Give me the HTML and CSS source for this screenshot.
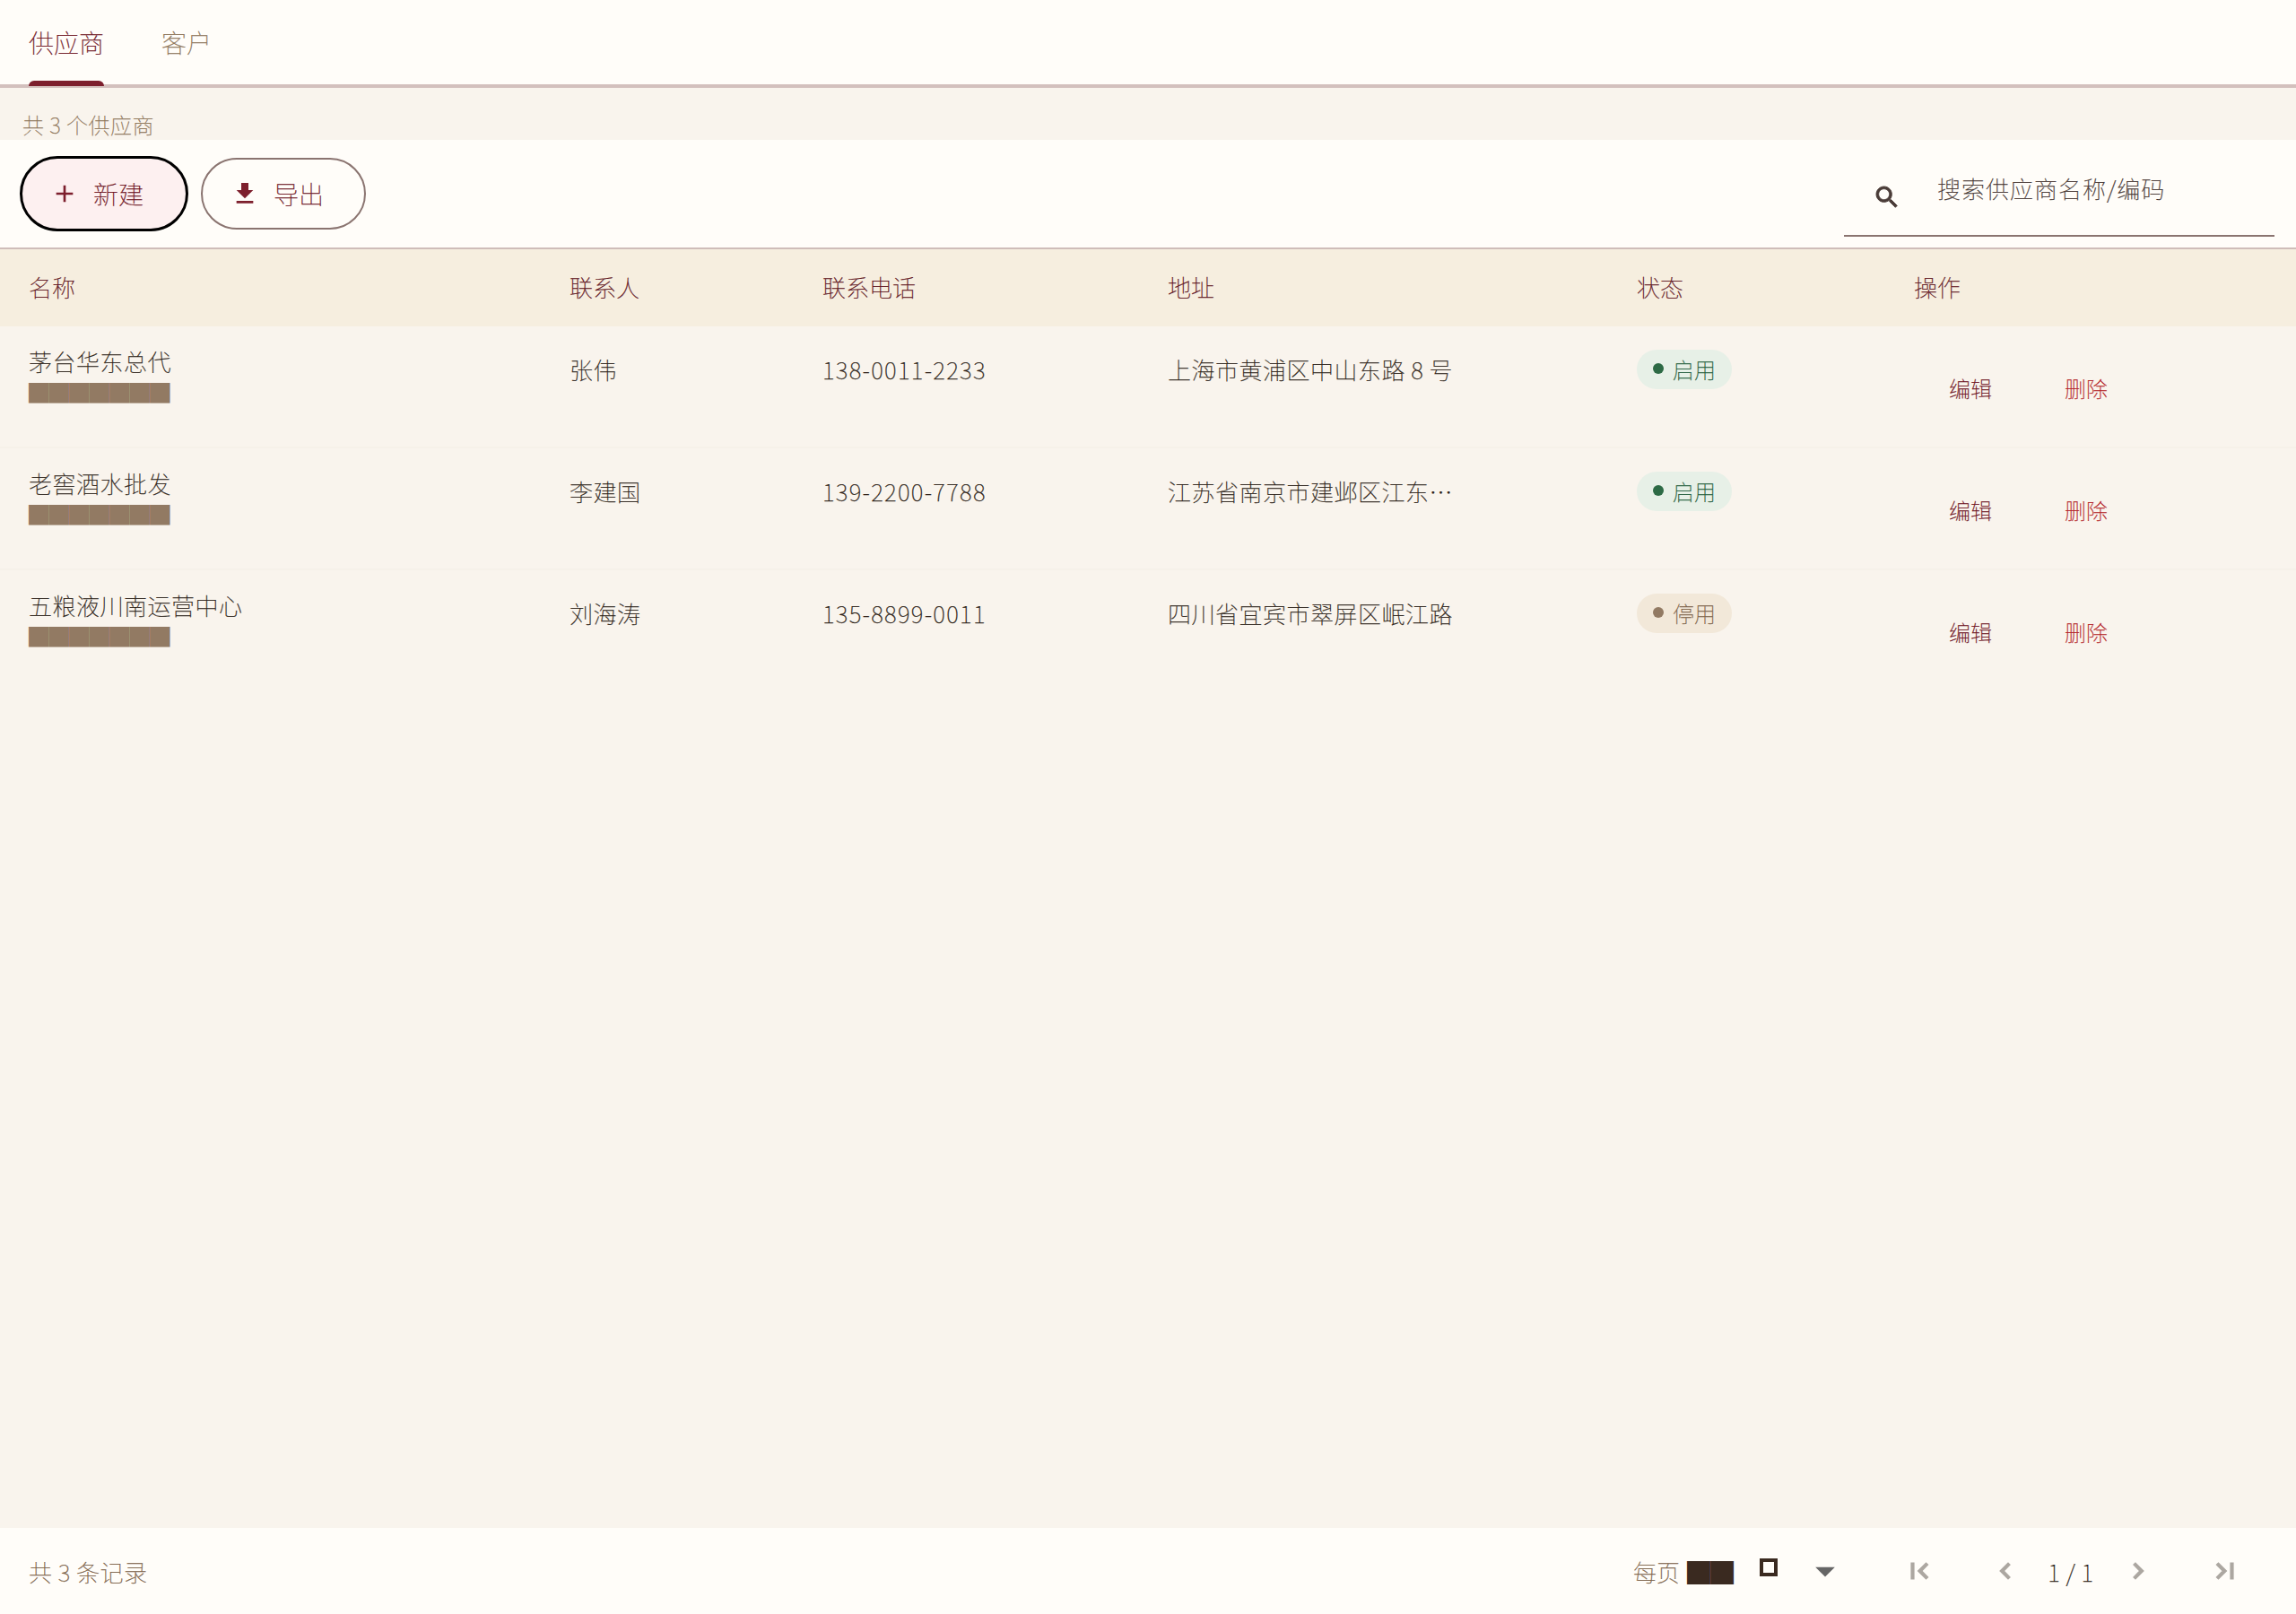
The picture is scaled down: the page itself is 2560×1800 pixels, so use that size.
FILE: index.html
```html
<!DOCTYPE html>
<html lang="zh-CN">
<head>
    <meta charset="UTF-8">
    <title>供应商</title>
    <link rel="stylesheet" href="styles.css">
</head>
<body>

<div class="page">
    <div class="tabs">
        <div class="tab tab-active">供应商</div>
        <div class="tab">客户</div>
    </div>

    <div class="summary">共 3 个供应商</div>

    <div class="toolbar">
        <div class="toolbar-left">
            <button class="btn btn-new">
                <svg class="btn-icon" viewBox="0 0 24 24"><path d="M19 13h-6v6h-2v-6H5v-2h6V5h2v6h6v2z"/></svg>
                <span>新建</span>
            </button>
            <button class="btn btn-export">
                <svg class="btn-icon" viewBox="0 0 24 24"><path d="M19 9h-4V3H9v6H5l7 7 7-7zM5 18v2h14v-2H5z"/></svg>
                <span>导出</span>
            </button>
        </div>
        <div class="search">
            <svg class="search-icon" viewBox="0 0 24 24"><path d="M15.5 14h-.79l-.28-.27C15.41 12.59 16 11.11 16 9.5 16 5.91 13.09 3 9.5 3S3 5.91 3 9.5 5.91 16 9.5 16c1.61 0 3.09-.59 4.23-1.57l.27.28v.79l5 4.99L20.49 19l-4.99-5zm-6 0C7.01 14 5 11.99 5 9.5S7.01 5 9.5 5 14 7.01 14 9.5 11.99 14 9.5 14z"/></svg>
            <span class="search-text">搜索供应商名称/编码</span>
        </div>
    </div>

    <div class="main">
        <table class="grid">
            <colgroup>
                <col class="col-name">
                <col class="col-contact">
                <col class="col-phone">
                <col class="col-address">
                <col class="col-status">
                <col>
            </colgroup>
            <thead>
                <tr>
                    <th>名称</th>
                    <th>联系人</th>
                    <th>联系电话</th>
                    <th>地址</th>
                    <th>状态</th>
                    <th>操作</th>
                </tr>
            </thead>
            <tbody>
                <tr>
                    <td class="cell-name">
                        <div class="name">茅台华东总代</div>
                        <div class="code">███████</div>
                    </td>
                    <td>张伟</td>
                    <td class="cell-phone">138-0011-2233</td>
                    <td><div class="address">上海市黄浦区中山东路 8 号</div></td>
                    <td class="cell-status"><span class="badge badge-on"><i class="dot"></i>启用</span></td>
                    <td class="cell-ops"><a class="op-edit">编辑</a><a class="op-del">删除</a></td>
                </tr>
                <tr>
                    <td class="cell-name">
                        <div class="name">老窖酒水批发</div>
                        <div class="code">███████</div>
                    </td>
                    <td>李建国</td>
                    <td class="cell-phone">139-2200-7788</td>
                    <td><div class="address">江苏省南京市建邺区江东中路 100 号</div></td>
                    <td class="cell-status"><span class="badge badge-on"><i class="dot"></i>启用</span></td>
                    <td class="cell-ops"><a class="op-edit">编辑</a><a class="op-del">删除</a></td>
                </tr>
                <tr>
                    <td class="cell-name">
                        <div class="name">五粮液川南运营中心</div>
                        <div class="code">███████</div>
                    </td>
                    <td>刘海涛</td>
                    <td class="cell-phone">135-8899-0011</td>
                    <td><div class="address">四川省宜宾市翠屏区岷江路</div></td>
                    <td class="cell-status"><span class="badge badge-off"><i class="dot"></i>停用</span></td>
                    <td class="cell-ops"><a class="op-edit">编辑</a><a class="op-del">删除</a></td>
                </tr>
            </tbody>
        </table>
    </div>

    <div class="footer">
        <div class="total">共 3 条记录</div>
        <div class="pager">
            <div class="per-page">
                <span>每页</span>
                <span class="per-block">██</span>
            </div>
            <i class="per-box"></i>
            <svg class="per-arrow" viewBox="0 0 24 24"><path d="M7 10l5 5 5-5z"/></svg>
            <svg class="nav-icon nav-first" viewBox="0 0 24 24"><path d="M18.41 16.59L13.82 12l4.59-4.59L17 6l-6 6 6 6zM6 6h2v12H6z"/></svg>
            <svg class="nav-icon nav-prev" viewBox="0 0 24 24"><path d="M15.41 7.41L14 6l-6 6 6 6 1.41-1.41L10.83 12z"/></svg>
            <span class="page-no">1 / 1</span>
            <svg class="nav-icon nav-next" viewBox="0 0 24 24"><path d="M10 6L8.59 7.41 13.17 12l-4.58 4.59L10 18l6-6z"/></svg>
            <svg class="nav-icon nav-last" viewBox="0 0 24 24"><path d="M5.59 7.41L10.18 12l-4.59 4.59L7 18l6-6-6-6zM16 6h2v12h-2z"/></svg>
        </div>
    </div>
</div>

</body>
</html>
```

FILE: styles.css
```css
* {
    box-sizing: border-box;
}
body {
    margin: 0;
    background-color: #f9f4ed;
    font-family: "Noto Sans CJK SC", "Noto Sans", sans-serif;
    font-weight: 100;
    color: #2c1e16;
    -webkit-text-stroke: 0.25px currentColor;
}
.page {
    display: flex;
    flex-direction: column;
    height: 1800px;
}
.tabs {
    display: flex;
    height: 98px;
    padding-left: 32px;
    gap: 64px;
    background-color: #fffdf9;
    border-bottom: 4px solid #d3c0bd;
}
.tab {
    position: relative;
    height: 94px;
    line-height: 94px;
    font-size: 28px;
    color: #8c7356;
}
.tab-active {
    color: #6e1222;
}
.tab-active::after {
    content: "";
    position: absolute;
    left: 0;
    right: 0;
    bottom: -2px;
    height: 6px;
    background-color: #7d1f2d;
    border-radius: 6px 6px 0 0;
}
.summary {
    height: 58px;
    padding: 24px 0 0 25px;
    font-size: 24px;
    line-height: 34px;
    letter-spacing: 0.5px;
    color: #8c7356;
}
.toolbar {
    display: flex;
    justify-content: space-between;
    height: 122px;
    padding: 18px 24px 0 22px;
    background-color: #fffdf9;
    border-bottom: 2px solid #cfbdb9;
}
.toolbar-left {
    display: flex;
    align-items: center;
    gap: 14px;
    height: 84px;
}
.btn {
    display: flex;
    align-items: center;
    gap: 16px;
    font-family: inherit;
    font-weight: 100;
    font-size: 28px;
    color: #6e1222;
    cursor: pointer;
}
.btn-new {
    width: 188px;
    height: 84px;
    padding: 0 0 0 31px;
    background-color: #fdf0f0;
    border: 3px solid #000;
    border-radius: 42px;
}
.btn-export {
    width: 184px;
    height: 80px;
    padding: 0 0 0 31px;
    background-color: #fffdf9;
    border: 2px solid #8a7470;
    border-radius: 40px;
}
.btn-icon {
    width: 32px;
    height: 32px;
    fill: #7d1f2d;
}
.search {
    display: flex;
    width: 480px;
    height: 90px;
    padding: 0 0 0 32px;
    border-bottom: 2px solid #8a7470;
}
.search-icon {
    width: 32px;
    height: 32px;
    margin-top: 30px;
    fill: #4a3c38;
    stroke: #4a3c38;
    stroke-width: 0.7;
}
.search-text {
    margin: 0 0 0 40px;
    padding-top: 17px;
    font-size: 26px;
    line-height: 38px;
    letter-spacing: 1px;
    color: #443430;
}
.main {
    flex: 1;
}
.grid {
    width: 100%;
    border-collapse: separate;
    border-spacing: 0;
    table-layout: fixed;
    font-size: 26px;
}
.col-name { width: 603px; }
.col-contact { width: 282px; }
.col-phone { width: 385px; }
.col-address { width: 523px; }
.col-status { width: 309px; }
.grid th {
    height: 86px;
    padding: 0 0 3px 32px;
    text-align: left;
    font-weight: 100;
    color: #5e1220;
    background-color: #f6eedf;
}
.grid td {
    height: 136px;
    padding: 29px 0 0 32px;
    vertical-align: top;
    line-height: 38px;
    letter-spacing: 0.5px;
    border-bottom: 2px solid #f6f1e9;
}
.grid tbody tr:last-child td {
    border-bottom: none;
}
.grid .cell-phone {
    font-variant-numeric: tabular-nums;
    letter-spacing: 1.3px;
}
.grid .cell-name {
    padding-top: 20px;
}
.name {
    line-height: 38px;
}
.code {
    height: 26px;
    margin-top: 2px;
    font-size: 22.5px;
    line-height: 26px;
    letter-spacing: 0;
    color: #927a63;
    -webkit-text-stroke: 0;
    white-space: nowrap;
}
.address {
    width: 320px;
    white-space: nowrap;
    overflow: hidden;
    text-overflow: ellipsis;
}
.grid .cell-status {
    padding-top: 23px;
}
.badge {
    display: inline-flex;
    align-items: center;
    gap: 10px;
    height: 44px;
    padding: 0 18px;
    border-radius: 22px;
    font-size: 24px;
    letter-spacing: 0;
}
.dot {
    width: 12px;
    height: 12px;
    margin-top: -2px;
    border-radius: 50%;
}
.badge-on {
    background-color: #e7f0e7;
    color: #1d5c3a;
}
.badge-on .dot {
    background-color: #2d6a45;
}
.badge-off {
    background-color: #f2e8d9;
    color: #7c6248;
}
.badge-off .dot {
    background-color: #927a63;
}
.grid .cell-ops {
    display: flex;
    gap: 81px;
    padding: 50px 0 0 71px;
    font-size: 24px;
    letter-spacing: 0;
}
.op-edit {
    color: #6e1222;
}
.op-del {
    color: #b41f28;
}
.footer {
    display: flex;
    justify-content: space-between;
    align-items: center;
    height: 96px;
    padding: 0 61px 0 32px;
    background-color: #fffdf9;
}
.total {
    font-size: 26px;
    letter-spacing: 0.5px;
    color: #7c6248;
}
.pager {
    display: flex;
    align-items: center;
}
.per-page {
    display: flex;
    align-items: center;
    gap: 8px;
    font-size: 26px;
    color: #7c6248;
}
.per-block {
    color: #3a2a20;
    -webkit-text-stroke: 0;
}
.per-box {
    width: 20px;
    height: 20px;
    margin: -8px 0 0 29px;
    border: 4px solid #3a2a20;
}
.per-arrow {
    width: 52px;
    height: 52px;
    margin: 0 -8px 0 27px;
    fill: #666;
}
.nav-icon {
    width: 36px;
    height: 36px;
    fill: #aca7a1;
    stroke: #aca7a1;
    stroke-width: 0.8;
}
.nav-first {
    margin-left: 69px;
}
.nav-prev {
    margin-left: 60px;
}
.page-no {
    width: 114px;
    margin-left: -2px;
    text-align: center;
    font-size: 26px;
    letter-spacing: 0.5px;
    color: #2c1e16;
}
.nav-last {
    margin-left: 61px;
}
```
